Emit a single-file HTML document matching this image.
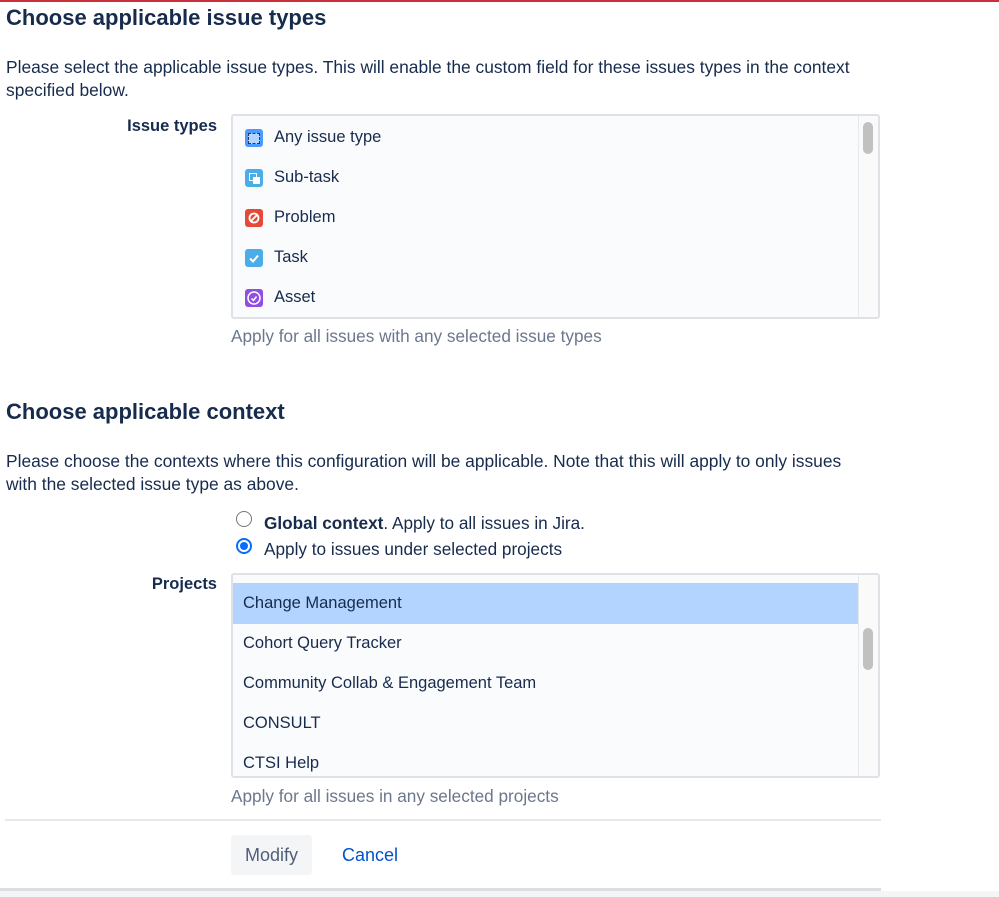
<!DOCTYPE html>
<html><head><style>
body{margin:0;width:999px;height:897px;background:#fff;font-family:"Liberation Sans",Arial,sans-serif;color:#172b4d;position:relative;overflow:hidden}
.a{position:absolute;white-space:nowrap}
h2{position:absolute;margin:0;font-size:22px;font-weight:bold;left:6px;white-space:nowrap}
.p{font-size:17.4px;left:6px}
.lbl{font-weight:bold;font-size:16.5px;right:782px}
.box{position:absolute;left:231px;width:645px;height:201px;border:2px solid #dfe1e6;border-radius:3px;background:#fafbfc;overflow:hidden}
.sb{position:absolute;right:0;top:0;width:19px;height:100%;background:#fafafa;border-left:1px solid #e8e8e8}
.th{position:absolute;left:4px;width:10px;background:#c1c1c1;border-radius:5px}
.it{position:absolute;font-size:16.5px;white-space:nowrap}
.ic{position:absolute;left:12px;width:18px;height:18px;border-radius:3px}
.help{font-size:17.2px;color:#6b778c;left:231px}
</style></head><body>
<div class="a" style="left:0;top:0;width:999px;height:2px;background:#c9303c"></div>
<h2 style="top:5px">Choose applicable issue types</h2>
<div class="a p" style="top:57px">Please select the applicable issue types. This will enable the custom field for these issues types in the context</div>
<div class="a p" style="top:80px">specified below.</div>
<div class="a lbl" style="top:117px">Issue types</div>
<div class="box" style="top:114px">
 <div class="ic" style="top:13px;background:#4c9aff;"><div style="position:absolute;left:3px;top:4px;width:10px;height:9px;border:1px dashed #253858;background:#b3d4ff"></div></div>
 <div class="it" style="left:41px;top:12px">Any issue type</div>
 <div class="ic" style="top:53px;background:#4bade8"><div style="position:absolute;left:4px;top:4px;width:6px;height:6px;border:1.5px solid #fff"></div><div style="position:absolute;left:8px;top:8px;width:7px;height:7px;background:#fff"></div></div>
 <div class="it" style="left:41px;top:52px">Sub-task</div>
 <div class="ic" style="top:93px;background:#e5493a"><svg width="18" height="18"><circle cx="9" cy="9" r="4.5" fill="none" stroke="#fff" stroke-width="1.8"/><line x1="6" y1="12" x2="12" y2="6" stroke="#fff" stroke-width="1.8"/></svg></div>
 <div class="it" style="left:41px;top:92px">Problem</div>
 <div class="ic" style="top:133px;background:#4bade8"><svg width="18" height="18"><path d="M5 9.5l3 3 5-6" fill="none" stroke="#fff" stroke-width="2"/></svg></div>
 <div class="it" style="left:41px;top:132px">Task</div>
 <div class="ic" style="top:173px;background:#904ee2"><svg width="18" height="18"><circle cx="9" cy="9" r="6" fill="none" stroke="#fff" stroke-width="1.5"/><path d="M6.5 9.5l2 2 3-4" fill="none" stroke="#fff" stroke-width="1.5"/></svg></div>
 <div class="it" style="left:41px;top:172px">Asset</div>
 <div class="sb"><div class="th" style="top:6px;height:32px"></div></div>
</div>
<div class="a help" style="top:326px">Apply for all issues with any selected issue types</div>
<h2 style="top:399px">Choose applicable context</h2>
<div class="a p" style="top:451px">Please choose the contexts where this configuration will be applicable. Note that this will apply to only issues</div>
<div class="a p" style="top:474px">with the selected issue type as above.</div>
<div class="a" style="left:236px;top:511px;width:14px;height:14px;border:1px solid #767676;border-radius:50%"></div>
<div class="a" style="left:264px;top:513px;font-size:17.2px"><b>Global context</b>. Apply to all issues in Jira.</div>
<div class="a" style="left:236px;top:538px;width:12px;height:12px;border:2px solid #0a6cff;border-radius:50%;background:#fff"><div style="margin:2px;width:8px;height:8px;border-radius:50%;background:#0a6cff"></div></div>
<div class="a" style="left:264px;top:539px;font-size:17.2px">Apply to issues under selected projects</div>
<div class="a lbl" style="top:575px">Projects</div>
<div class="box" style="top:573px">
 <div style="position:absolute;left:0;top:8px;width:627px;height:41px;background:#b3d4ff"></div>
 <div class="it" style="left:10px;top:19px">Change Management</div>
 <div class="it" style="left:10px;top:59px">Cohort Query Tracker</div>
 <div class="it" style="left:10px;top:99px">Community Collab &amp; Engagement Team</div>
 <div class="it" style="left:10px;top:139px">CONSULT</div>
 <div class="it" style="left:10px;top:179px">CTSI Help</div>
 <div class="sb"><div class="th" style="top:53px;height:42px"></div></div>
</div>
<div class="a help" style="top:786px">Apply for all issues in any selected projects</div>
<div class="a" style="left:5px;top:819px;width:876px;height:2px;background:#e8e9ec"></div>
<div class="a" style="left:231px;top:835px;width:81px;height:40px;background:#f4f5f7;border-radius:3px;color:#505f79;font-size:18px;line-height:40px;text-align:center">Modify</div>
<div class="a" style="left:342px;top:845px;color:#0052cc;font-size:18px">Cancel</div>
<div class="a" style="left:0;top:888px;width:881px;height:3px;background:#dcdde0"></div>
<div class="a" style="left:0;top:891px;width:999px;height:6px;background:#f4f5f7"></div>
</body></html>
